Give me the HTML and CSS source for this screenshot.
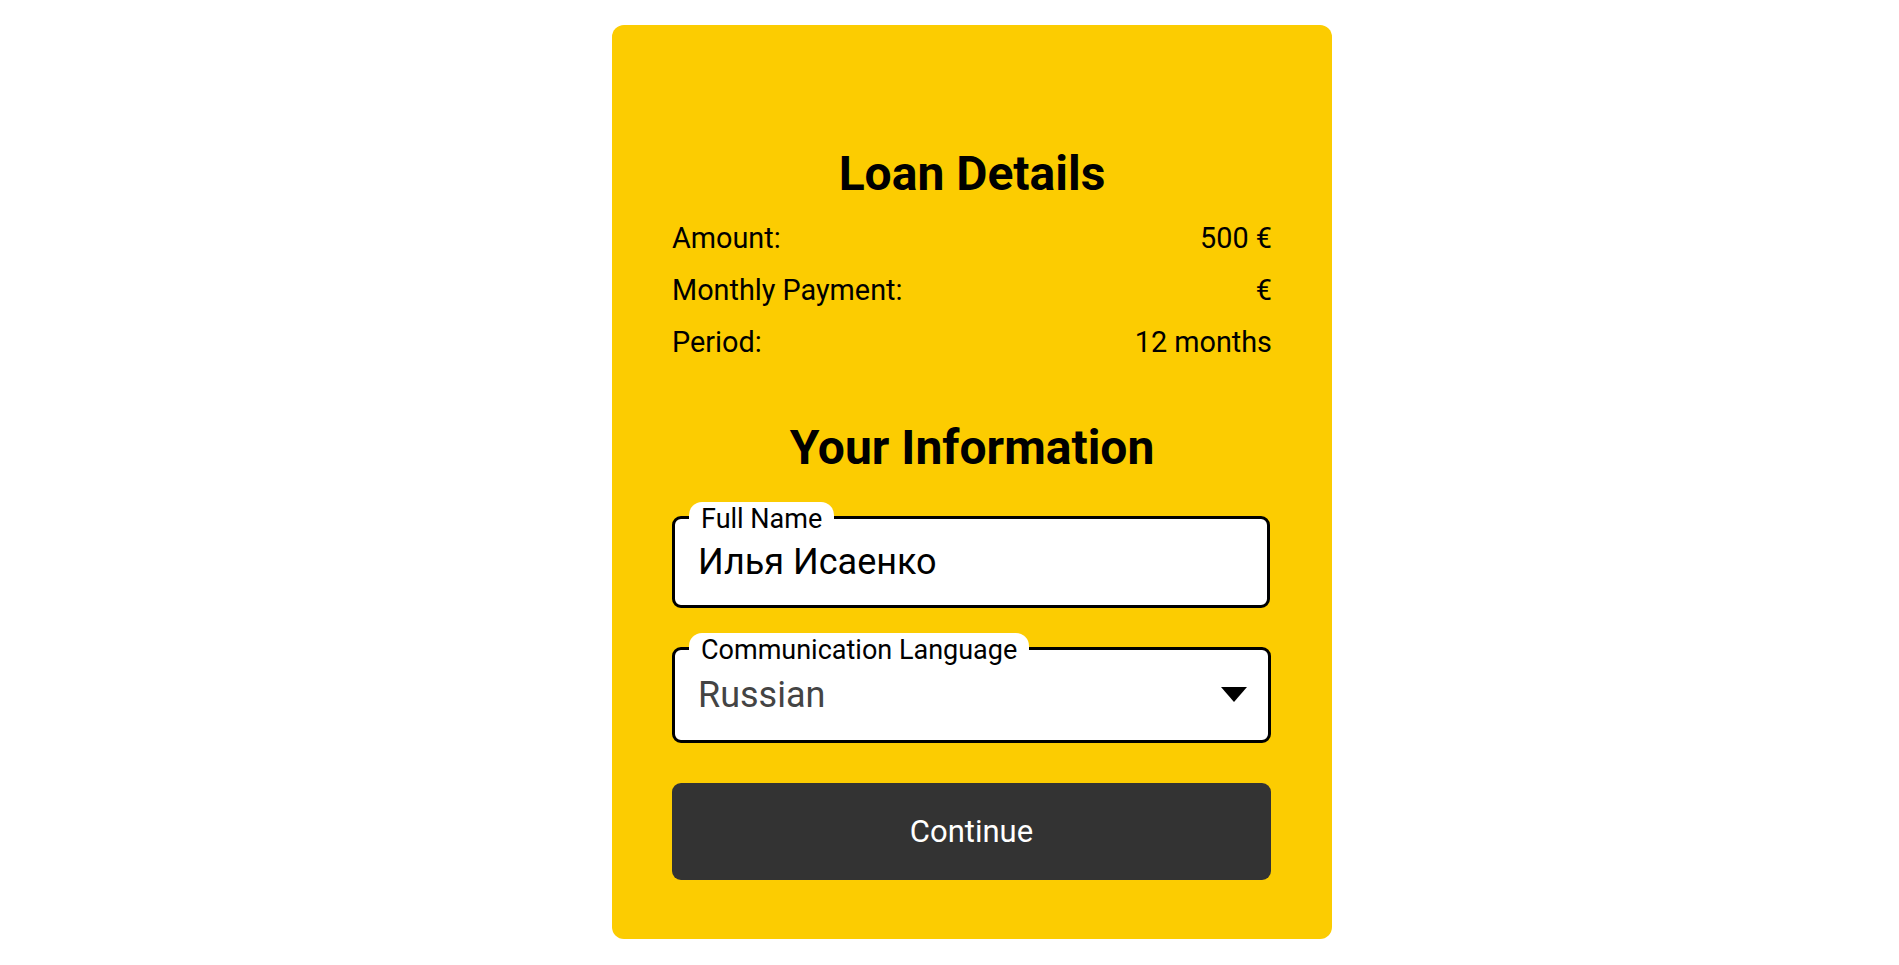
FILE: index.html
```html
<!DOCTYPE html>
<html lang="en">
<head>
<meta charset="utf-8">
<title>Loan Details</title>
<link rel="stylesheet" href="styles.css">
</head>
<body>
<main class="page">
  <section class="card">
    <h2 class="title">Loan Details</h2>
    <div class="rows">
      <div class="row"><span>Amount:</span><span>500 €</span></div>
      <div class="row"><span>Monthly Payment:</span><span>€</span></div>
      <div class="row"><span>Period:</span><span>12 months</span></div>
    </div>
    <h2 class="title title-info">Your Information</h2>
    <div class="field field-name">
      <label class="field-label" for="fullname">Full Name</label>
      <input class="field-input" id="fullname" type="text" value="Илья Исаенко">
    </div>
    <div class="field field-select">
      <label class="field-label" for="lang">Communication Language</label>
      <select class="field-input select-input" id="lang">
        <option>Russian</option>
      </select>
      <span class="arrow"></span>
    </div>
    <button class="btn" type="button">Continue</button>
  </section>
</main>
</body>
</html>
```

FILE: styles.css
```css
html, body {
  margin: 0;
  padding: 0;
  background: #ffffff;
}
body {
  font-family: Roboto, "Noto Sans", "Liberation Sans", sans-serif;
  color: #000;
}
.page {
  display: flex;
  justify-content: center;
  padding: 25px 0 0 45px;
}
.card {
  box-sizing: border-box;
  width: 720px;
  background: #fccc01;
  border-radius: 12px;
  padding: 120px 60px 59px;
  display: flex;
  flex-direction: column;
}
.title {
  margin: 0;
  font-size: 48px;
  font-weight: 700;
  line-height: 58px;
  text-align: center;
}
.rows {
  margin-top: 9px;
  display: flex;
  flex-direction: column;
}
.row {
  display: flex;
  justify-content: space-between;
  align-items: center;
  height: 52px;
  font-size: 28.8px;
}
.title-info {
  margin-top: 51px;
}
.field {
  position: relative;
  margin-top: 39px;
}
.field-label {
  position: absolute;
  left: 17px;
  top: -14px;
  height: 30px;
  padding: 2px 12px 0 12px;
  background: #fff;
  border-radius: 13px 13px 0 0;
  font-size: 27px;
  line-height: 30px;
  color: #000;
}
.field-input {
  display: block;
  box-sizing: border-box;
  width: 598px;
  height: 92px;
  margin: 0;
  padding: 0 24px 0 23px;
  border: 3px solid #000;
  border-radius: 9px;
  background: #fff;
  font-family: inherit;
  font-size: 36px;
  color: #000;
  outline: none;
}
.field-select .field-input {
  height: 96px;
  width: 599px;
}
.select-input {
  appearance: none;
  -webkit-appearance: none;
  color: #444;
}
.arrow {
  position: absolute;
  right: 25px;
  top: 40px;
  width: 0;
  height: 0;
  border-left: 13px solid transparent;
  border-right: 13px solid transparent;
  border-top: 15px solid #000;
  pointer-events: none;
}
.btn {
  margin-top: 40px;
  height: 97px;
  width: 599px;
  border: 0;
  border-radius: 9px;
  background: #333333;
  color: #fff;
  font-family: inherit;
  font-size: 31px;
  cursor: pointer;
}
```
